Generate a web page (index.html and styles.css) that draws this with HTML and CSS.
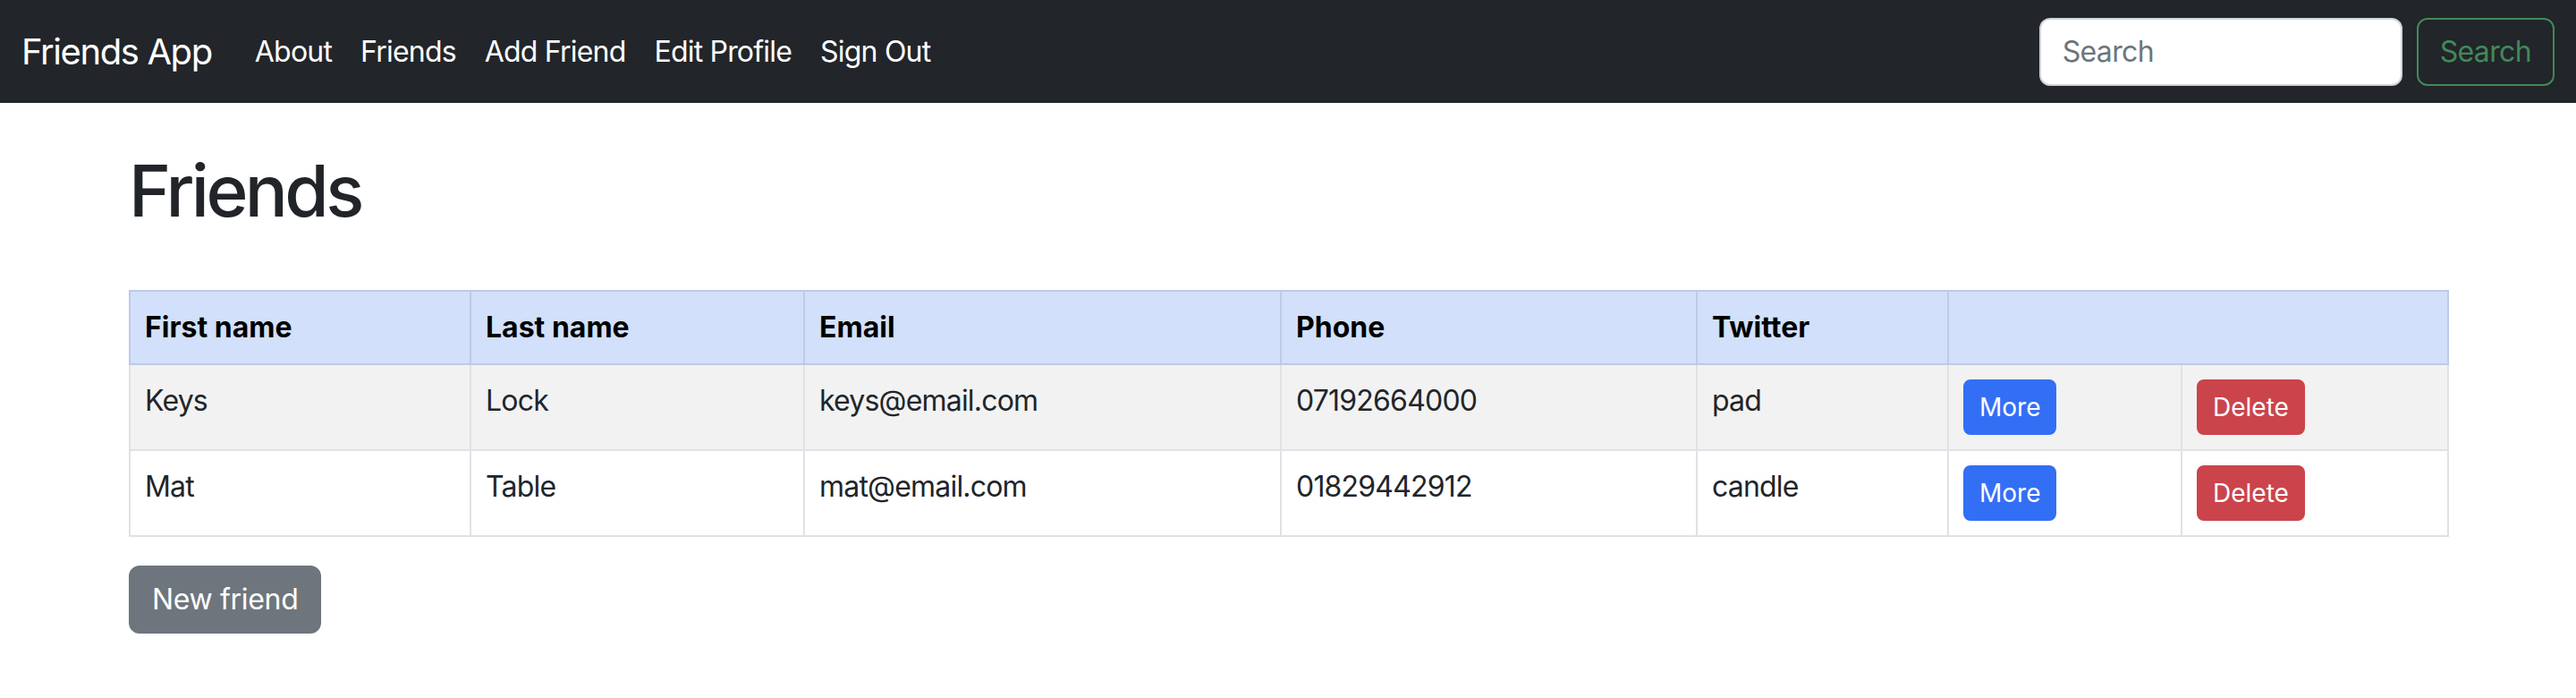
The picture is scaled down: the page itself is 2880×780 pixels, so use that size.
FILE: index.html
```html
<!DOCTYPE html>
<html lang="en">
<head>
<meta charset="utf-8">
<title>Friends App</title>
<link rel="stylesheet" href="styles.css">
</head>
<body>
<nav class="navbar">
  <a class="brand" href="#">Friends App</a>
  <ul class="nav">
    <li><a class="nav-link" href="#">About</a></li>
    <li><a class="nav-link" href="#">Friends</a></li>
    <li><a class="nav-link" href="#">Add Friend</a></li>
    <li><a class="nav-link" href="#">Edit Profile</a></li>
    <li><a class="nav-link" href="#">Sign Out</a></li>
  </ul>
  <form class="search">
    <input class="search-input" type="search" placeholder="Search">
    <button class="btn-outline-success" type="button">Search</button>
  </form>
</nav>
<main class="container">
  <h1 class="title">Friends</h1>
  <table class="table">
    <colgroup>
      <col class="c1"><col class="c2"><col class="c3"><col class="c4"><col class="c5"><col class="c6"><col class="c7">
    </colgroup>
    <thead>
      <tr class="head-row">
        <th>First name</th>
        <th>Last name</th>
        <th>Email</th>
        <th>Phone</th>
        <th>Twitter</th>
        <th colspan="2"></th>
      </tr>
    </thead>
    <tbody>
      <tr class="striped">
        <td>Keys</td>
        <td>Lock</td>
        <td>keys@email.com</td>
        <td>07192664000</td>
        <td>pad</td>
        <td><a class="btn-sm btn-primary" href="#">More</a></td>
        <td><a class="btn-sm btn-danger" href="#">Delete</a></td>
      </tr>
      <tr>
        <td>Mat</td>
        <td>Table</td>
        <td>mat@email.com</td>
        <td>01829442912</td>
        <td>candle</td>
        <td><a class="btn-sm btn-primary" href="#">More</a></td>
        <td><a class="btn-sm btn-danger" href="#">Delete</a></td>
      </tr>
    </tbody>
  </table>
  <a class="btn btn-secondary" href="#">New friend</a>
</main>
</body>
</html>
```

FILE: styles.css
```css
* {
  box-sizing: border-box;
}

body {
  margin: 0;
  font-family: Inter, "Noto Sans", "Liberation Sans", sans-serif;
  font-size: 32px;
  line-height: 48px;
  letter-spacing: -0.025em;
  color: #212529;
  background: #ffffff;
}

a {
  text-decoration: none;
}

/* Navbar */
.navbar {
  display: flex;
  align-items: center;
  height: 115px;
  padding: 0 24px;
  background: #222529;
}

.brand {
  color: #ffffff;
  font-size: 40px;
  line-height: 60px;
  letter-spacing: -0.035em;
  padding: 10px 0;
  margin-right: 32px;
}

.nav {
  display: flex;
  list-style: none;
  margin: 0;
  padding: 0;
}

.nav-link {
  display: block;
  color: #ffffff;
  font-size: 32px;
  line-height: 48px;
  padding: 16px;
}

.search {
  display: flex;
  margin: 0 0 0 auto;
}

.search-input {
  width: 406px;
  height: 76px;
  margin-right: 16px;
  padding: 12px 24px;
  font-family: inherit;
  font-size: 32px;
  letter-spacing: -0.02em;
  color: #212529;
  background: #ffffff;
  border: 2px solid #ced4da;
  border-radius: 12px;
  outline: none;
}

.search-input::placeholder {
  color: #6c757d;
}

.btn-outline-success {
  height: 76px;
  padding: 12px 24px;
  font-family: inherit;
  font-size: 32px;
  line-height: 48px;
  letter-spacing: -0.02em;
  color: #41895a;
  background: transparent;
  border: 2px solid #41895a;
  border-radius: 12px;
}

/* Content */
.container {
  max-width: 2640px;
  margin: 0 auto;
  padding: 0 24px;
}

.title {
  margin: 50px 0 63px;
  font-size: 80px;
  line-height: 96px;
  font-weight: 500;
  letter-spacing: -0.045em;
}

.table {
  width: 100%;
  table-layout: fixed;
  border-collapse: collapse;
  margin-bottom: 32px;
  vertical-align: top;
}

.c1 { width: 381px; }
.c2 { width: 373px; }
.c3 { width: 533px; }
.c4 { width: 465px; }
.c5 { width: 281px; }
.c6 { width: 261px; }
.c7 { width: 298px; }

.table th,
.table td {
  padding: 16px;
  border: 2px solid #dfe2e6;
  text-align: left;
  vertical-align: top;
}

.head-row th {
  background: #d2e0fb;
  border-color: #bccbe6;
  color: #000000;
  font-weight: 700;
  letter-spacing: 0;
}

.striped td {
  background: #f2f2f2;
}

.btn-sm {
  display: inline-block;
  padding: 8px 16px;
  font-size: 28px;
  line-height: 42px;
  letter-spacing: 0;
  color: #ffffff;
  border: 2px solid transparent;
  border-radius: 8px;
}

.btn-primary {
  background: #336ff5;
  border-color: #336ff5;
}

.btn-danger {
  background: #cb444b;
  border-color: #cb444b;
}

.btn {
  display: inline-block;
  padding: 12px 24px;
  font-size: 32px;
  line-height: 48px;
  letter-spacing: -0.01em;
  border: 2px solid transparent;
  border-radius: 12px;
  color: #ffffff;
}

.btn-secondary {
  background: #6e757d;
  border-color: #6e757d;
}
```
